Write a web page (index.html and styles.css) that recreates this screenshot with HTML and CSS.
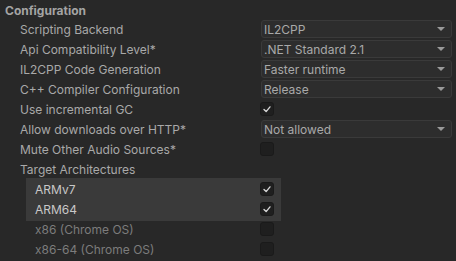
FILE: index.html
```html
<!DOCTYPE html>
<html lang="en">
<head>
    <meta charset="UTF-8">
    <title>Player Settings - Configuration</title>
    <link rel="stylesheet" href="styles.css">
</head>
<body>
    <div class="section-title">Configuration</div>

    <div class="prop">
        <span class="label">Scripting Backend</span>
        <div class="dropdown"><span>IL2CPP</span><i class="arrow"></i></div>
    </div>
    <div class="prop">
        <span class="label">Api Compatibility Level*</span>
        <div class="dropdown"><span>.NET Standard 2.1</span><i class="arrow"></i></div>
    </div>
    <div class="prop">
        <span class="label">IL2CPP Code Generation</span>
        <div class="dropdown"><span>Faster runtime</span><i class="arrow"></i></div>
    </div>
    <div class="prop">
        <span class="label">C++ Compiler Configuration</span>
        <div class="dropdown"><span>Release</span><i class="arrow"></i></div>
    </div>
    <div class="prop">
        <span class="label">Use incremental GC</span>
        <div class="check on"><svg viewBox="0 0 14 14"><path d="M3.5 7.5 L6 10 L10.5 4.5"/></svg></div>
    </div>
    <div class="prop">
        <span class="label">Allow downloads over HTTP*</span>
        <div class="dropdown"><span>Not allowed</span><i class="arrow"></i></div>
    </div>
    <div class="prop">
        <span class="label">Mute Other Audio Sources*</span>
        <div class="check"></div>
    </div>
    <div class="prop">
        <span class="label">Target Architectures</span>
    </div>

    <div class="arch-list">
        <div class="arch-selected">
            <div class="arch">
                <span class="arch-name">ARMv7</span>
                <div class="check on"><svg viewBox="0 0 14 14"><path d="M3.5 7.5 L6 10 L10.5 4.5"/></svg></div>
            </div>
            <div class="arch">
                <span class="arch-name">ARM64</span>
                <div class="check on"><svg viewBox="0 0 14 14"><path d="M3.5 7.5 L6 10 L10.5 4.5"/></svg></div>
            </div>
        </div>
        <div class="arch disabled">
            <span class="arch-name">x86 (Chrome OS)</span>
            <div class="check"></div>
        </div>
        <div class="arch disabled">
            <span class="arch-name">x86-64 (Chrome OS)</span>
            <div class="check"></div>
        </div>
    </div>
</body>
</html>
```

FILE: styles.css
```css
body {
    margin: 0;
    background: #282828;
    color: #a9a9a9;
    font-family: Inter, "Noto Sans", sans-serif;
    font-size: 12px;
    overflow: hidden;
}

/* section header */
.section-title {
    height: 20px;
    line-height: 21px;
    padding-left: 5px;
    font-weight: 700;
    color: #a4a4a4;
}

/* one label + field row */
.prop {
    display: grid;
    grid-template-columns: 240px 1fr;
    height: 20px;
    padding-left: 20px;
    padding-right: 4px;
}
.label {
    line-height: 20px;
    white-space: nowrap;
}

.dropdown {
    height: 18px;
    margin-left: 1px;
    box-sizing: border-box;
    display: flex;
    align-items: center;
    justify-content: space-between;
    padding: 0 6px 0 2px;
    background: #2d2d2d;
    border: 1px solid #3a3a3a;
    border-radius: 3px;
    color: #a9a9a9;
}
.arrow {
    width: 0;
    height: 0;
    border-left: 4px solid transparent;
    border-right: 4px solid transparent;
    border-top: 4px solid #9a9a9a;
}

/* toggle */
.check {
    width: 14px;
    height: 14px;
    margin-top: 2px;
    box-sizing: border-box;
    background: #1f1f1f;
    border: 1px solid #1a1a1a;
    border-radius: 3px;
}
.check svg {
    display: block;
    width: 12px;
    height: 12px;
    fill: none;
    stroke: #d6d6d6;
    stroke-width: 1.6;
    stroke-linecap: round;
    stroke-linejoin: round;
}

/* Target Architectures list */
.arch-list {
    margin-left: 26px;
    width: 255px;
}
.arch-selected {
    background: #3a3a3a;
    margin-top: -2px;
    padding: 2px 0 1px;
    margin-bottom: -1px;
}
.arch {
    display: grid;
    grid-template-columns: 225px 14px;
    height: 20px;
    padding-left: 9px;
}
.arch-name {
    line-height: 20px;
    color: #c8c8c8;
}
.arch.disabled .arch-name {
    color: #7c7c7c;
}
```
